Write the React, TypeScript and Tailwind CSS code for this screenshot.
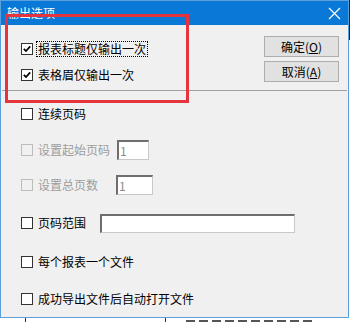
import React from "react";

const font = { fontFamily: '"Noto Sans CJK SC", "Noto Sans", sans-serif' };

function Box({ checked = false, disabled = false }: { checked?: boolean; disabled?: boolean }) {
  return (
    <span
      className={
        "flex h-[12px] w-[12px] shrink-0 items-center justify-center border " +
        (disabled ? "border-[#bcbcbc] bg-[#f0f0f0]" : "border-[#333333] bg-white")
      }
    >
      {checked && (
        <svg width="8" height="8" viewBox="0 0 8 8">
          <path d="M0.8 3.8 L3 6 L7.2 1.4" fill="none" stroke="#000" strokeWidth="1.7" />
        </svg>
      )}
    </span>
  );
}

function Row({
  label,
  checked,
  disabled,
  focus,
  className = "",
  children,
}: {
  label: string;
  checked?: boolean;
  disabled?: boolean;
  focus?: boolean;
  className?: string;
  children?: React.ReactNode;
}) {
  return (
    <div className={"flex h-[22px] items-center pl-[20px] " + className}>
      <Box checked={checked} disabled={disabled} />
      <span
        className={
          "ml-[3px] px-[1px] text-[12px] leading-[14px] whitespace-nowrap " +
          (focus ? "border border-dotted border-black " : "border border-transparent ") +
          (disabled ? "text-[#9d9d9d]" : "text-black")
        }
      >
        {label}
      </span>
      {children}
    </div>
  );
}

function Field({ value, disabled, className }: { value?: string; disabled?: boolean; className: string }) {
  return (
    <div
      className={
        "flex items-center border border-[#c8c8c8] border-t-[2px] border-l-[2px] border-t-[#6e6e6e] border-l-[#6e6e6e] bg-white pl-[1px] text-[12px] " +
        (disabled ? "text-[#8a8a8a] " : "text-black ") +
        className
      }
    >
      {value}
    </div>
  );
}

function Btn({ text, hot }: { text: string; hot: string }) {
  return (
    <button className="flex h-[21px] w-[75px] items-center justify-center border border-[#adadad] bg-[#e1e1e1] text-[12px] text-black">
      {text}(<u>{hot}</u>)
    </button>
  );
}

export default function App() {
  return (
    <div className="relative h-[322px] w-[352px] overflow-hidden bg-white" style={font}>
      <div className="flex h-[318px] w-[349px] flex-col border border-[#5aa0dc] bg-[#f0f0f0]">
        {/* title bar */}
        <div className="flex h-[24px] shrink-0 items-center justify-between bg-[#0a78d6] pl-[6px] pr-[7px]">
          <span className="text-[12px] text-white">输出选项</span>
          <svg width="13" height="13" viewBox="0 0 13 13">
            <path d="M1 1 L12 12 M12 1 L1 12" stroke="#fff" strokeWidth="1.2" />
          </svg>
        </div>

        {/* top section */}
        <div className="flex h-[65px] shrink-0 justify-between">
          <div className="flex flex-col gap-[4px] pt-[13px]">
            <Row label="报表标题仅输出一次" checked focus />
            <Row label="表格眉仅输出一次" checked />
          </div>
          <div className="flex flex-col gap-[4px] pt-[11px] pr-[9px]">
            <Btn text="确定" hot="O" />
            <Btn text="取消" hot="A" />
          </div>
        </div>
        <div className="mx-[1px] h-px shrink-0 bg-[#a0a0a0]" />

        <Row label="连续页码" className="mt-[12px]" />
        <Row label="设置起始页码" disabled className="mt-[14px]">
          <Field value="1" disabled className="ml-[5px] h-[20px] w-[32px]" />
        </Row>
        <Row label="设置总页数" disabled className="mt-[13px]">
          <Field value="1" disabled className="ml-[16px] h-[20px] w-[37px]" />
        </Row>
        <Row label="页码范围" className="mt-[16px]">
          <Field className="ml-[12px] h-[19px] w-[195px]" />
        </Row>
        <Row label="每个报表一个文件" className="mt-[17px]" />
        <Row label="成功导出文件后自动打开文件" className="mt-[15px]" />
      </div>

      {/* background window peeking below */}
      <div className="flex h-[4px] items-start">
        <div className="ml-[25px] h-[4px] w-px bg-[#333]" />
        <div className="ml-[139px] h-[4px] w-px bg-[#333]" />
        <div className="ml-[20px] mt-[2px] h-[2px] w-[130px] bg-[repeating-linear-gradient(90deg,#555_0_9px,transparent_9px_13px)]" />
      </div>
      <div className="absolute right-[2px] top-0 h-[40px] w-px bg-[#222]" />

      {/* red annotation */}
      <div className="absolute left-[5px] top-[14px] h-[89px] w-[184px] border-[3px] border-[#e5343c]" />
    </div>
  );
}
